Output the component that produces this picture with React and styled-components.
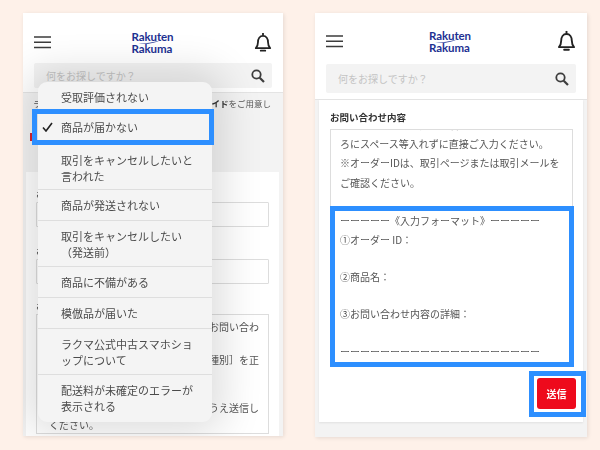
import React from 'react'
import styled, { createGlobalStyle } from 'styled-components'

const GlobalStyle = createGlobalStyle`
  html, body { margin: 0; padding: 0; }
  body { font-family: "Noto Sans CJK JP", "Noto Sans", sans-serif; color: #444; }
`

const Page = styled.div`
  width: 600px;
  height: 450px;
  box-sizing: border-box;
  padding: 13px 13px 13px 23px;
  display: flex;
  gap: 32px;
  background: #fef1e9;
  overflow: hidden;
`

const Phone = styled.section`
  position: relative;
  flex: 0 0 ${p => p.$width}px;
  height: ${p => p.$height}px;
  display: flex;
  flex-direction: column;
  overflow: hidden;
  background: #f3f3f3;
  box-shadow: 1px 1px 4px rgba(0, 0, 0, 0.1);
  filter: blur(0.3px);
`

const Header = styled.header`
  flex: 0 0 ${p => p.$height}px;
  box-sizing: border-box;
  padding: ${p => p.$top}px 11px 0;
  background: #fff;
  border-bottom: 1px solid #e4e4e4;
`

const HeaderRow = styled.div`
  height: ${p => p.$height}px;
  display: flex;
  align-items: center;
  justify-content: space-between;
`

const Logo = styled.div`
  position: relative;
  margin-top: 2px;
  font-family: Lato, "Noto Sans", sans-serif;
  font-weight: 700;
  font-size: 11.5px;
  line-height: 12px;
  color: #1d3192;
  letter-spacing: -0.1px;
`

const Swoosh = styled.svg`
  position: absolute;
  left: 6px;
  top: 9px;
`

const SearchBar = styled.div`
  height: ${p => p.$height}px;
  margin-top: ${p => p.$gap}px;
  box-sizing: border-box;
  padding: 0 7px 0 12px;
  display: flex;
  align-items: center;
  justify-content: space-between;
  border-radius: 2px;
  background: #f3f3f3;
  color: #c4c4c4;
  font-size: 10px;
`

const NoticeRow = styled.div`
  flex: none;
  height: 20px;
  padding: 0 12px 0 10px;
  display: flex;
  align-items: center;
  justify-content: space-between;
  font-size: 8.5px;
  color: #555;
  b { font-weight: 700; color: #333; }
`

const RedMark = styled.div`
  flex: none;
  height: 8px;
  width: 3px;
  margin: 20px 0 31px 7px;
  background: #d9232e;
`

const Card = styled.div`
  flex: 1 0 auto;
  margin: 0 4px 0 3px;
  padding: 17px 10px 0;
  background: #fff;
`

const Label = styled.div`
  height: 13px;
  font-size: 8.5px;
  line-height: 8px;
  color: #333;
`

const Input = styled.div`
  height: 25px;
  margin-bottom: ${p => p.$gap}px;
  box-sizing: border-box;
  border: 1px solid #ddd;
  border-radius: 1px;
`

const FormText = styled.div`
  height: 120px;
  box-sizing: border-box;
  padding-top: 4px;
  border: 1px solid #ddd;
  font-size: 10px;
  line-height: 16.3px;
  color: #555;
`

const FormLine = styled.div`
  height: 16.3px;
  padding: 0 9px 0 12px;
  text-align: ${p => p.$align || 'left'};
`

const Menu = styled.div`
  position: absolute;
  left: 15px;
  top: 69px;
  width: 174px;
  height: 340px;
  border-radius: 9px;
  background: #f4f4f4;
  box-shadow: 0 0 42px 10px rgba(0, 0, 0, 0.14);
  font-size: 11px;
  line-height: 16px;
  color: #4b4b4b;
`

const MenuItem = styled.div`
  box-sizing: border-box;
  padding: 7px 18px 7px 23px;
  height: ${p => p.$height}px;
  border-bottom: ${p => (p.$last ? 'none' : '1px solid #dedede')};
`

const SelectedItem = styled.div`
  position: relative;
  box-sizing: border-box;
  height: 36px;
  margin: 0 -2px 0 -6px;
  padding: 5px 0 0 24px;
  border: 5px solid #2d8fff;
`

const Check = styled.svg`
  position: absolute;
  left: 5px;
  top: 8px;
`

const FormCard = styled.div`
  flex: none;
  height: 322px;
  margin: 0 4px;
  padding: 10px 10px 0 11px;
  box-sizing: border-box;
  background: #fff;
  box-shadow: 0 1px 2px rgba(0, 0, 0, 0.08);
`

const Title = styled.h2`
  margin: 0;
  height: 19px;
  font-size: 9.5px;
  line-height: 14px;
  font-weight: 700;
  color: #333;
`

const TextBox = styled.div`
  height: 238px;
  font-size: 10px;
  line-height: 19.2px;
  color: #555;
`

const UpperText = styled.div`
  height: 77px;
  box-sizing: border-box;
  border: 1px solid #ddd;
  border-bottom: none;
  overflow: hidden;
`

const TextLine = styled.div`
  height: ${p => (p.$tight ? 18.7 : 19.2)}px;
  padding-left: 9px;
  white-space: nowrap;
  line-height: inherit;
`

const ScrolledLines = styled.div`
  margin-top: -15px;
`

const Highlight = styled.div`
  height: 161px;
  box-sizing: border-box;
  margin-right: -1px;
  border: 5px solid #2d8fff;
  padding-left: 1px;
  background: #fff;
`

const FormatLines = styled.div`
  margin-left: -5px;
`

const ButtonRow = styled.div`
  display: flex;
  justify-content: flex-end;
  margin: 4px -13px 0 0;
`

const ButtonFrame = styled.div`
  padding: 2px 5px 3px 3px;
  border: 5px solid #2d8fff;
  background: #fff;
`

const SendButton = styled.button`
  display: block;
  width: 39px;
  height: 31px;
  padding: 0;
  border: none;
  border-radius: 3px;
  background: #ee0a1c;
  color: #fff;
  font: 700 10px "Noto Sans CJK JP", sans-serif;
`

const Burger = () => (
  <svg width="17" height="13" viewBox="0 0 17 13">
    <path d="M0 1h17M0 6.3h17M0 11.6h17" stroke="#3c3c3c" strokeWidth="1.5" />
  </svg>
)

const BellIcon = ({ size }) => (
  <svg width={size} height={size * 1.15} viewBox="0 0 20 23" fill="none" stroke="#222" strokeWidth="2">
    <path d="M2 18c1.8-1.8 2.4-3.5 2.4-6.6C4.4 7.4 6.4 4.2 10 4.2s5.6 3.200 5.600 7.200c0 3.100.6 4.800 2.400 6.600z" strokeLinejoin="round" />
    <path d="M10 1v3" />
    <path d="M7.500 20.800h5" strokeLinecap="round" />
  </svg>
)

const SearchIcon = () => (
  <svg width="14" height="14" viewBox="0 0 14 14" fill="none" stroke="#3d3d3d">
    <circle cx="5.500" cy="5.500" r="4.200" strokeWidth="1.800" />
    <path d="M8.700 8.700 13 13" strokeWidth="2.200" />
  </svg>
)

const BrandLogo = () => (
  <Logo>
    Rakuten
    <Swoosh width="22" height="4" viewBox="0 0 22 4">
      <path d="M0 3.500C7 3.700 14 2.800 22 .5 15 4 7 4.200 0 3.500z" fill="#1d3192" />
    </Swoosh>
    <br />
    Rakuma
  </Logo>
)

const menuBefore = [{ text: '受取評価されない', height: 27, last: true }]
const menuAfter = [
  { text: '取引をキャンセルしたいと言われた', height: 45 },
  { text: '商品が発送されない', height: 31 },
  { text: '取引をキャンセルしたい（発送前）', height: 46 },
  { text: '商品に不備がある', height: 31 },
  { text: '模倣品が届いた', height: 31 },
  { text: 'ラクマ公式中古スマホショップについて', height: 46 },
  { text: '配送料が未確定のエラーが表示される', height: 47, last: true },
]

const formLines = [
  { text: 'お問い合わ', align: 'right' },
  { text: '' },
  { text: '種別］を正', align: 'right' },
  { text: '' },
  { text: '' },
  { text: 'うえ送信し', align: 'right' },
  { text: 'ください。' },
]

const App = () => (
  <>
    <GlobalStyle />
    <Page>
      <Phone $width={260} $height={423}>
        <Header $height={80} $top={16}>
          <HeaderRow $height={26}>
            <Burger />
            <BrandLogo />
            <BellIcon size={18} />
          </HeaderRow>
          <SearchBar $height={25} $gap={8}>
            何をお探しですか？
            <SearchIcon />
          </SearchBar>
        </Header>
        <NoticeRow>
          <span>ラ</span>
          <span><b>イド</b>をご用意し</span>
        </NoticeRow>
        <RedMark />
        <Card>
          <Label>お</Label>
          <Input $gap={19} />
          <Label>お</Label>
          <Input $gap={17} />
          <Label>お</Label>
          <FormText>
            {formLines.map((line, i) => (
              <FormLine key={i} $align={line.align}>{line.text}</FormLine>
            ))}
          </FormText>
        </Card>
        <Menu>
          {menuBefore.map(item => (
            <MenuItem key={item.text} $height={item.height} $last={item.last}>{item.text}</MenuItem>
          ))}
          <SelectedItem>
            <Check width="11" height="10" viewBox="0 0 11 10">
              <path d="M1 5.500 4 9 10 1" fill="none" stroke="#222" strokeWidth="1.600" />
            </Check>
            商品が届かない
          </SelectedItem>
          {menuAfter.map(item => (
            <MenuItem key={item.text} $height={item.height} $last={item.last}>{item.text}</MenuItem>
          ))}
        </Menu>
      </Phone>

      <Phone $width={272} $height={424}>
        <Header $height={87} $top={13}>
          <HeaderRow $height={30}>
            <Burger />
            <BrandLogo />
            <BellIcon size={19} />
          </HeaderRow>
          <SearchBar $height={29} $gap={8}>
            何をお探しですか？
            <SearchIcon />
          </SearchBar>
        </Header>
        <FormCard>
          <Title>お問い合わせ内容</Title>
          <TextBox>
            <UpperText>
              <ScrolledLines>
                <TextLine>※オーダーIDの入力は、各項目の「：」の後</TextLine>
                <TextLine>ろにスペース等入れずに直接ご入力ください。</TextLine>
                <TextLine>※オーダーIDは、取引ページまたは取引メールを</TextLine>
                <TextLine>ご確認ください。</TextLine>
              </ScrolledLines>
            </UpperText>
            <Highlight>
              <FormatLines>
                <TextLine $tight>ーーーーー《入力フォーマット》ーーーーー</TextLine>
                <TextLine $tight>①オーダー ID：</TextLine>
                <TextLine $tight />
                <TextLine $tight>②商品名：</TextLine>
                <TextLine $tight />
                <TextLine $tight>③お問い合わせ内容の詳細：</TextLine>
                <TextLine $tight />
                <TextLine $tight>ーーーーーーーーーーーーーーーーーーーー</TextLine>
              </FormatLines>
            </Highlight>
          </TextBox>
          <ButtonRow>
            <ButtonFrame>
              <SendButton>送信</SendButton>
            </ButtonFrame>
          </ButtonRow>
        </FormCard>
      </Phone>
    </Page>
  </>
)

export default App
